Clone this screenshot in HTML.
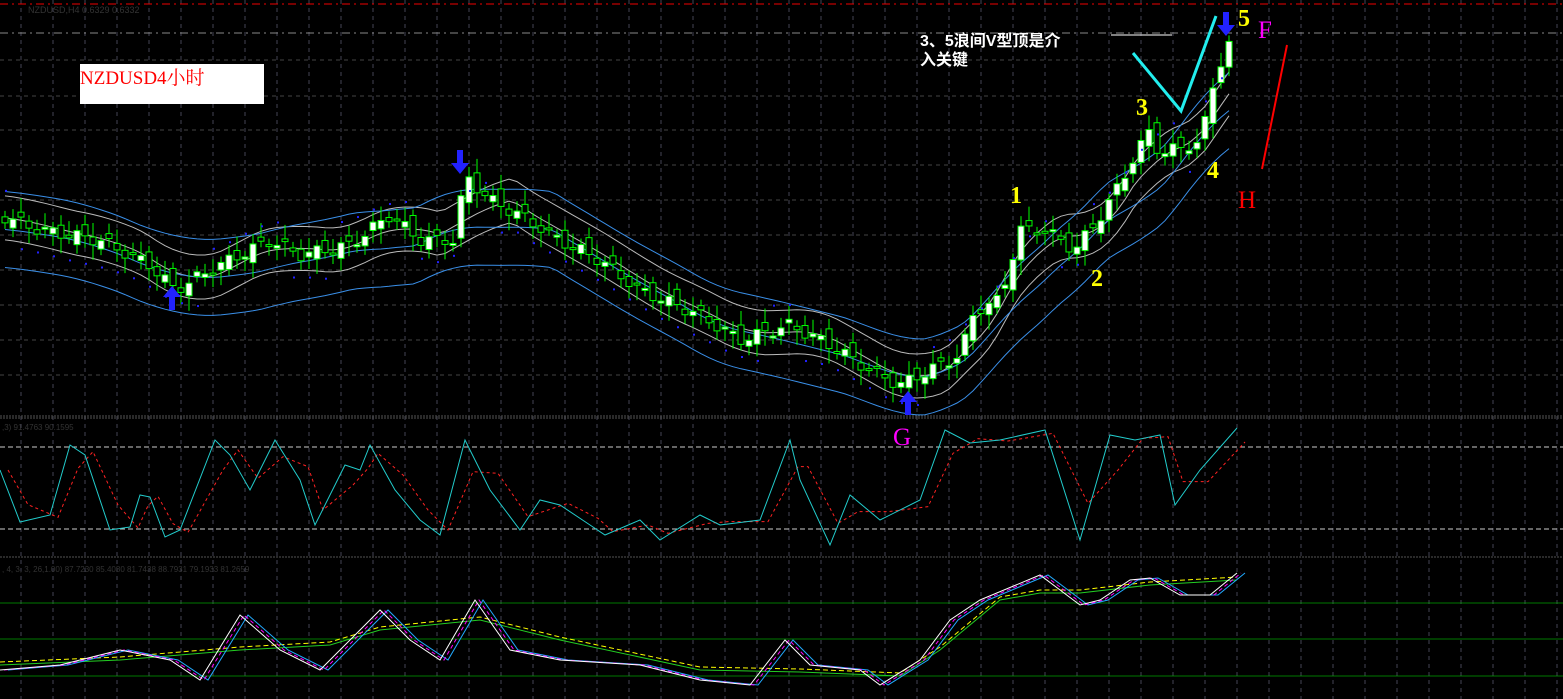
<!DOCTYPE html>
<html><head><meta charset="utf-8"><style>
html,body{margin:0;padding:0;background:#000;overflow:hidden}
svg{display:block}
</style></head><body>
<svg id="cv" width="1563" height="699" xmlns="http://www.w3.org/2000/svg" style="font-family:'Liberation Sans','Noto Sans CJK SC',sans-serif">
<rect width="1563" height="699" fill="#000"/>
<g id="grid"></g>
<line x1="0" y1="4" x2="1563" y2="4" stroke="#e00" stroke-dasharray="8,4,2,4"/>
<line x1="0" y1="33" x2="1563" y2="33" stroke="#888" stroke-dasharray="8,4,2,4"/>
<text x="28" y="13" fill="#333" font-size="9">NZDUSD,H4 0.6329 0.6332</text>
<g id="chart"></g>
<rect x="80" y="64" width="184" height="40" fill="#fff"/>
<text x="80" y="84" fill="#f00" font-size="19" font-family="'Liberation Serif','Noto Serif CJK SC',serif">NZDUSD4小时</text>
<text x="920" y="46" fill="#fff" font-size="16" font-weight="bold" font-family="'Liberation Sans','Noto Sans CJK SC',sans-serif">3、5浪间V型顶是介</text>
<text x="920" y="65" fill="#fff" font-size="16" font-weight="bold" font-family="'Liberation Sans','Noto Sans CJK SC',sans-serif">入关键</text>
<line x1="1111" y1="35" x2="1172" y2="35" stroke="#fff" stroke-width="1"/>
<polyline points="1133,53 1181,111 1216,16" fill="none" stroke="#2ee" stroke-width="3"/>
<line x1="1287" y1="45" x2="1262" y2="169" stroke="#f00" stroke-width="2"/>
<g font-family="'Liberation Serif',serif" font-size="24" font-weight="bold">
<text x="1010" y="203" fill="#ff0">1</text>
<text x="1091" y="286" fill="#ff0">2</text>
<text x="1136" y="115" fill="#ff0">3</text>
<text x="1207" y="178" fill="#ff0">4</text>
<text x="1238" y="26" fill="#ff0">5</text>
<text x="1258" y="38" fill="#f0f" font-size="25" font-weight="normal">F</text>
<text x="1238" y="208" fill="#f00" font-size="25" font-weight="normal">H</text>
<text x="893" y="445" fill="#f0f" font-size="25" font-weight="normal">G</text>
</g>
<line x1="0" y1="416" x2="1563" y2="416" stroke="#555" stroke-dasharray="2,1"/>
<line x1="0" y1="418" x2="1563" y2="418" stroke="#555" stroke-dasharray="2,1"/>
<line x1="0" y1="447" x2="1563" y2="447" stroke="#ccc" stroke-dasharray="5,3"/>
<line x1="0" y1="529" x2="1563" y2="529" stroke="#ccc" stroke-dasharray="5,3"/>
<text x="2" y="430" fill="#333" font-size="8">,3) 91.4763 90.1595</text>
<line x1="0" y1="557" x2="1563" y2="557" stroke="#555" stroke-dasharray="2,1"/>
<text x="2" y="572" fill="#333" font-size="8">, 4, 3, 3, 26,1.00) 87.7230 85.4080 81.7438 88.7931 79.1933 81.2659</text>
<line x1="0" y1="603" x2="1563" y2="603" stroke="#0a0" stroke-opacity=".7"/>
<line x1="0" y1="639" x2="1563" y2="639" stroke="#0a0" stroke-opacity=".7"/>
<line x1="0" y1="676" x2="1563" y2="676" stroke="#0a0" stroke-opacity=".7"/>
<g id="ind"></g>
</svg>
<script>
(function(){
var NS="http://www.w3.org/2000/svg";
function el(p,t,a){var e=document.createElementNS(NS,t);for(var k in a)e.setAttribute(k,a[k]);p.appendChild(e);return e;}
var G=document.getElementById('grid');
for(var gx=21;gx<1563;gx+=32)el(G,'line',{x1:gx,y1:0,x2:gx,y2:699,stroke:'#445',"stroke-dasharray":"4,4"});
[60,96,130,165,200,235,270,305,340,375].forEach(function(y){el(G,'line',{x1:0,y1:y,x2:1563,y2:y,stroke:'#444',"stroke-dasharray":"4,4"});});
function interp(pts,x){for(var i=1;i<pts.length;i++){if(x<=pts[i][0]){var a=pts[i-1],b=pts[i];return a[1]+(b[1]-a[1])*(x-a[0])/(b[0]-a[0]);}}return pts[pts.length-1][1];}
var P=[[0,215],[40,230],[100,240],[150,265],[175,290],[220,265],[270,240],[300,255],[350,245],[390,215],[420,240],[455,240],[465,175],[490,200],[520,215],[560,240],[600,260],[640,290],[700,315],[740,340],[790,325],[830,345],[870,370],[900,385],[930,370],[960,355],[975,310],[1000,300],[1020,230],[1045,230],[1075,250],[1105,210],[1130,165],[1150,130],[1160,155],[1185,145],[1200,145],[1215,75],[1232,40]];
var CH=document.getElementById('chart');
var closes=[],xs=[];
for(var x0=5;x0<=1232;x0+=8){xs.push(x0);closes.push(interp(P,x0));}
function cma(arr,n,lag,i){var t=0,c=0;for(var j=i-n+lag;j<=i+lag;j++){var k=Math.max(0,Math.min(arr.length-1,j));t+=arr[k];c++;}return t/c;}
var mid=[],b1=[];
for(var i=0;i<closes.length;i++){mid.push(cma(closes,8,2,i));b1.push(cma(closes,16,5,i));}
function line(arr,off,col,w){var d='';for(var i=0;i<arr.length;i++)d+=(i?'L':'M')+xs[i].toFixed(1)+' '+(arr[i]+off).toFixed(1);el(CH,'path',{d:d,fill:'none',stroke:col,"stroke-width":w||1});}
line(mid,0,'#bbb');line(mid,-22,'#bbb');line(mid,22,'#bbb');
line(b1,-28,'#3a8fe8');line(b1,10,'#3a8fe8');line(b1,48,'#3a8fe8');
var prev=closes[0];
for(var i=0;i<closes.length;i++){
 var o=prev+Math.sin(i*2.3)*7,c=closes[i]+Math.cos(i*1.7)*6;prev=c;
 var tp=Math.min(o,c),h=Math.max(2,Math.abs(o-c));var cx=xs[i];
 el(CH,'line',{x1:cx,y1:tp-6-(i%3)*4,x2:cx,y2:tp+h+6+(i%4)*3,stroke:'#0f0'});
 el(CH,'rect',{x:cx-3,y:tp,width:6,height:h,fill:c<o?'#fff':'#000',stroke:'#0f0'});
 if(i%2==0){var dy=(closes[i]>mid[i])?mid[i]+28:mid[i]-28;el(CH,'rect',{x:cx,y:dy,width:2,height:2,fill:'#22f'});}
}
function arrowUp(x,y){el(CH,'path',{d:'M'+x+' '+y+' l-9 11 h6 v13 h6 v-13 h6z',fill:'#22f'});}
function arrowDn(x,y){el(CH,'path',{d:'M'+x+' '+y+' l-9 -11 h6 v-13 h6 v13 h6z',fill:'#22f'});}
arrowUp(172,286);arrowUp(908,391);arrowDn(460,174);arrowDn(1226,36);
var I=document.getElementById('ind');
function poly(pts,col,dash,w,shift){var d='';pts.forEach(function(p,i){d+=(i?'L':'M')+(p[0]+(shift||0))+' '+p[1];});var a={d:d,fill:'none',stroke:col,"stroke-width":w||1};if(dash)a["stroke-dasharray"]=dash;el(I,'path',a);}
var S=[[0,470],[20,522],[50,515],[70,445],[85,455],[110,530],[130,527],[140,495],[150,497],[165,537],[180,530],[215,440],[230,455],[250,490],[275,440],[300,480],[315,525],[345,465],[360,470],[370,445],[395,490],[420,520],[440,535],[465,440],[490,490],[520,530],[540,500],[560,505],[590,525],[605,535],[640,520],[660,540],[700,515],[720,525],[760,520],[790,440],[800,480],[830,545],[850,495],[880,520],[920,500],[945,430],[970,443],[1000,440],[1045,430],[1080,540],[1110,435],[1135,440],[1160,435],[1175,505],[1200,470],[1237,428]];
var SR=S.map(function(p,i){var q=S[Math.max(0,i-1)];return [p[0],(p[1]*2+q[1])/3];});
poly(SR,'#f22','3,3',1,8);poly(S,'#2cc',null,1);
var W=[[0,670],[60,665],[120,650],[170,660],[200,680],[240,615],[280,650],[320,670],[380,610],[410,640],[440,660],[475,600],[510,650],[560,660],[640,665],[700,680],[750,685],[785,640],[810,665],[860,670],[880,685],[920,660],[950,620],[980,600],[1040,575],[1080,605],[1100,600],[1130,580],[1150,578],[1180,595],[1210,595],[1237,573]];
var Y=[[0,665],[120,660],[240,650],[330,645],[380,630],[480,620],[560,640],[700,670],[800,672],[900,676],[940,650],[1000,600],[1040,593],[1080,593],[1150,585],[1237,580]];
poly(Y,'#2c2',null,1,0);poly(Y.map(function(p){return[p[0],p[1]-3]}),'#ff0','5,3',1,0);
poly(W,'#2af',null,1,8);poly(W,'#f0f','4,3',1,4);poly(W,'#fff',null,1,0);
})();
</script>
</body></html>
